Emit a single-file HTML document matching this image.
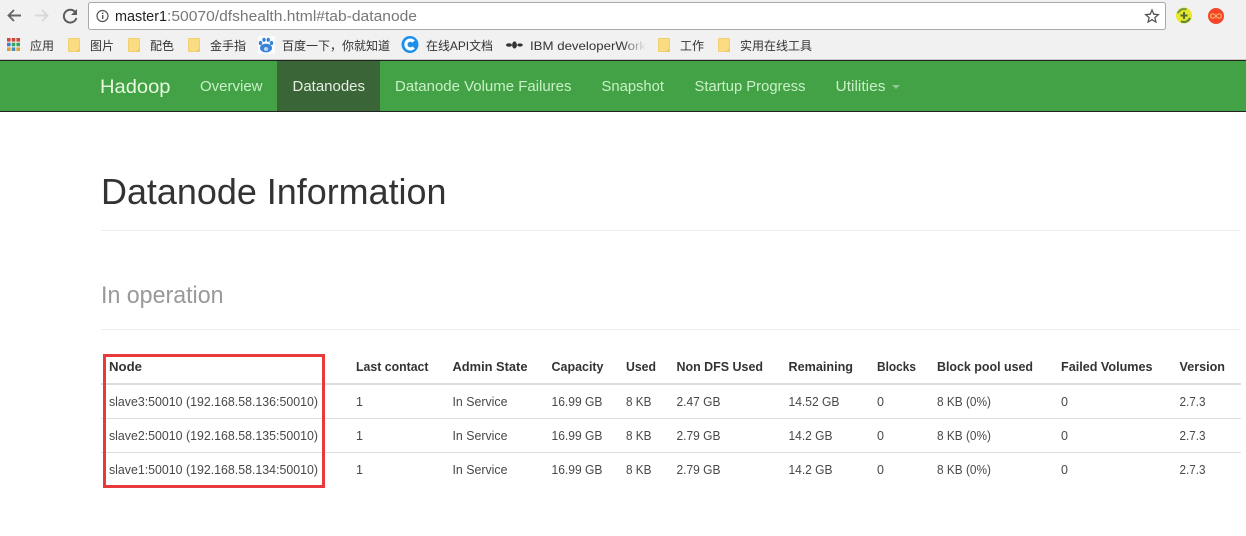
<!DOCTYPE html>
<html lang="zh"><head><meta charset="utf-8"><title>Datanode Information</title>
<style>
html,body{margin:0;padding:0;background:#fff;width:1246px;height:536px;overflow:hidden}
svg{display:block}
text{font-family:"Liberation Sans","Noto Sans CJK SC",sans-serif;white-space:pre}
.b text{font-size:12px;fill:#333}
.n text{font-size:14.5px;fill:#c9f0c6}
.h text{font-size:12.5px;font-weight:bold;fill:#333}
.d text{font-size:12.5px;fill:#484848}
</style></head><body>
<svg width="1246" height="536" viewBox="0 0 1246 536" xmlns="http://www.w3.org/2000/svg">
<defs>
<linearGradient id="fade" x1="0" x2="1" y1="0" y2="0"><stop offset="0" stop-color="#f2f1f1" stop-opacity="0"/><stop offset="1" stop-color="#f2f1f1"/></linearGradient>
<g id="folder"><rect x="0.5" y="0.5" width="11" height="13" rx="0.5" fill="#fcdc82" stroke="#f0cf72"/><path d="M8 13.5H11.5V10.5Z" fill="#ecc35e"/></g>
</defs>
<rect width="1246" height="60" fill="#f2f1f1"/>
<!-- nav arrows -->
<path d="M21 15.5H8.5M14 10L8.5 15.5L14 21" fill="none" stroke="#666" stroke-width="1.9"/>
<path d="M35 15.5H47.5M42 10L47.5 15.5L42 21" fill="none" stroke="#d8d8d8" stroke-width="1.9"/>
<path d="M75.5 12.5A6.4 6.4 0 1 0 76.4 18" fill="none" stroke="#5c5c5c" stroke-width="2"/>
<path d="M77 9V15H71Z" fill="#5c5c5c"/>
<!-- address bar -->
<rect x="88.5" y="2.5" width="1077" height="27" rx="2" fill="#fff" stroke="#a9a9a9"/>
<circle cx="102.5" cy="16" r="5.5" fill="none" stroke="#555" stroke-width="1.2"/>
<rect x="102" y="15" width="1.4" height="4" fill="#555"/><rect x="102" y="12.6" width="1.4" height="1.4" fill="#555"/>
<text x="115" y="21" font-size="14.5" fill="#222" textLength="52" lengthAdjust="spacingAndGlyphs">master1</text>
<text x="167" y="21" font-size="14.5" fill="#777" textLength="250" lengthAdjust="spacingAndGlyphs">:50070/dfshealth.html#tab-datanode</text>
<path d="M1152 10L1153.8 14.2L1158.3 14.6L1154.9 17.6L1155.9 22L1152 19.7L1148.1 22L1149.1 17.6L1145.7 14.6L1150.2 14.2Z" fill="none" stroke="#555" stroke-width="1.3"/>
<!-- extensions -->
<circle cx="1184" cy="15.5" r="8" fill="#e8e62e"/>
<path d="M1176.8 13A7.6 7.6 0 0 1 1187 8.5L1186 10.5A5.4 5.4 0 0 0 1179 13.6Z" fill="#7da03a"/>
<path d="M1191 18.5A7.6 7.6 0 0 1 1180.5 22.2L1181.5 20.3A5.4 5.4 0 0 0 1189 17.5Z" fill="#5e8a3a"/>
<path d="M1184 12V19M1180.5 15.5H1187.5" stroke="#4f6e30" stroke-width="2"/>
<circle cx="1216" cy="16" r="8" fill="#f2452a"/>
<path d="M1216 16C1214 13 1210.5 13.5 1210.5 16S1214 19 1216 16C1218 13 1221.5 13.5 1221.5 16S1218 19 1216 16Z" fill="none" stroke="#f8b060" stroke-width="1.2"/>
<!-- bookmarks -->
<g>
<rect x="7" y="38" width="3.6" height="3.6" fill="#d3453a"/><rect x="11.7" y="38" width="3.6" height="3.6" fill="#c9473c"/><rect x="16.4" y="38" width="3.6" height="3.6" fill="#d3453a"/>
<rect x="7" y="42.7" width="3.6" height="3.6" fill="#3f7fd0"/><rect x="11.7" y="42.7" width="3.6" height="3.6" fill="#3aa35a"/><rect x="16.4" y="42.7" width="3.6" height="3.6" fill="#3aa35a"/>
<rect x="7" y="47.4" width="3.6" height="3.6" fill="#e0a030"/><rect x="11.7" y="47.4" width="3.6" height="3.6" fill="#3f8fc0"/><rect x="16.4" y="47.4" width="3.6" height="3.6" fill="#e0a030"/>
</g>
<use href="#folder" x="68" y="38"/><use href="#folder" x="128" y="38"/><use href="#folder" x="188" y="38"/><use href="#folder" x="658" y="38"/><use href="#folder" x="718" y="38"/>
<!-- baidu paw -->
<rect x="258" y="36" width="17" height="18" fill="#fafcff"/>
<g fill="#3a82d6"><ellipse cx="266" cy="48" rx="6" ry="4.4"/><ellipse cx="260.5" cy="43" rx="1.7" ry="2.1"/><ellipse cx="264" cy="39.8" rx="1.7" ry="2.1"/><ellipse cx="268.3" cy="39.8" rx="1.7" ry="2.1"/><ellipse cx="271.5" cy="43" rx="1.7" ry="2.1"/></g>
<ellipse cx="266" cy="49" rx="2.2" ry="2" fill="#b9d4f4"/>
<!-- C icon -->
<circle cx="410" cy="44.5" r="8.5" fill="#1b90ea"/>
<path d="M413.6 41.6A4.4 4.4 0 1 0 413.6 47.4" fill="none" stroke="#fff" stroke-width="3.2"/>
<!-- IBM bee -->
<g fill="#333"><ellipse cx="514.5" cy="45" rx="2.4" ry="3.6"/><ellipse cx="509" cy="45" rx="3" ry="1.8"/><ellipse cx="520" cy="45" rx="2.8" ry="1.6"/></g>
<g class="b">
<text x="30" y="50" textLength="24">应用</text>
<text x="90" y="50" textLength="24">图片</text>
<text x="150" y="50" textLength="24">配色</text>
<text x="210" y="50" textLength="36">金手指</text>
<text x="282" y="50" textLength="108">百度一下，你就知道</text>
<text x="426" y="50" textLength="67" lengthAdjust="spacingAndGlyphs">在线API文档</text>
<text x="530" y="50" textLength="116" lengthAdjust="spacingAndGlyphs">IBM developerWork</text>
<text x="680" y="50" textLength="24">工作</text>
<text x="740" y="50" textLength="72">实用在线工具</text>
</g>
<rect x="622" y="36" width="24" height="20" fill="url(#fade)"/>
<!-- navbar -->
<rect x="0" y="59" width="1246" height="1" fill="#c9c9c5"/>
<rect x="0" y="60" width="1246" height="52" fill="#222"/>
<rect x="0" y="61" width="1246" height="50" fill="#43a246"/>
<rect x="277" y="61" width="103" height="50" fill="#3a6537"/>
<text x="100" y="93" font-size="19.5" fill="#e6f8e0" textLength="70.5" lengthAdjust="spacingAndGlyphs">Hadoop</text>
<g class="n">
<text x="200" y="91" textLength="62.5" lengthAdjust="spacingAndGlyphs">Overview</text>
<text x="292.5" y="91" textLength="72.5" lengthAdjust="spacingAndGlyphs" style="fill:#e8eee6">Datanodes</text>
<text x="395" y="91" textLength="176.5" lengthAdjust="spacingAndGlyphs">Datanode Volume Failures</text>
<text x="601.5" y="91" textLength="62.5" lengthAdjust="spacingAndGlyphs">Snapshot</text>
<text x="694.5" y="91" textLength="111" lengthAdjust="spacingAndGlyphs">Startup Progress</text>
<text x="835.5" y="91" textLength="50" lengthAdjust="spacingAndGlyphs">Utilities</text>
</g>
<path d="M892 85H900L896 89Z" fill="#8fc98f"/>
<!-- headings -->
<text x="101" y="204" font-size="36" fill="#333" textLength="345.5" lengthAdjust="spacingAndGlyphs">Datanode Information</text>
<rect x="101" y="230" width="1139" height="1" fill="#eee"/>
<text x="101" y="303" font-size="24" fill="#999" textLength="122.5" lengthAdjust="spacingAndGlyphs">In operation</text>
<rect x="101" y="329" width="1139" height="1" fill="#eee"/>
<!-- table -->
<rect x="101" y="383" width="1140" height="2" fill="#ddd"/>
<rect x="101" y="418" width="1140" height="1" fill="#ddd"/>
<rect x="101" y="452" width="1140" height="1" fill="#ddd"/>
<g class="h">
<text x="109" y="371" textLength="33" lengthAdjust="spacingAndGlyphs">Node</text>
<text x="356" y="371" textLength="72.5" lengthAdjust="spacingAndGlyphs">Last contact</text>
<text x="452.5" y="371" textLength="75" lengthAdjust="spacingAndGlyphs">Admin State</text>
<text x="551.5" y="371" textLength="52" lengthAdjust="spacingAndGlyphs">Capacity</text>
<text x="626" y="371" textLength="30" lengthAdjust="spacingAndGlyphs">Used</text>
<text x="676.5" y="371" textLength="86.5" lengthAdjust="spacingAndGlyphs">Non DFS Used</text>
<text x="788.5" y="371" textLength="64.5" lengthAdjust="spacingAndGlyphs">Remaining</text>
<text x="877" y="371" textLength="39" lengthAdjust="spacingAndGlyphs">Blocks</text>
<text x="937" y="371" textLength="96" lengthAdjust="spacingAndGlyphs">Block pool used</text>
<text x="1061" y="371" textLength="91.5" lengthAdjust="spacingAndGlyphs">Failed Volumes</text>
<text x="1179.5" y="371" textLength="45.5" lengthAdjust="spacingAndGlyphs">Version</text>
</g>
<g class="d">
<text x="109" y="406" textLength="209" lengthAdjust="spacingAndGlyphs">slave3:50010 (192.168.58.136:50010)</text>
<text x="356" y="406">1</text><text x="452.5" y="406" textLength="55" lengthAdjust="spacingAndGlyphs">In Service</text><text x="551.5" y="406" textLength="51" lengthAdjust="spacingAndGlyphs">16.99 GB</text><text x="626" y="406" textLength="25.5" lengthAdjust="spacingAndGlyphs">8 KB</text><text x="676.5" y="406" textLength="44" lengthAdjust="spacingAndGlyphs">2.47 GB</text><text x="788.5" y="406" textLength="51" lengthAdjust="spacingAndGlyphs">14.52 GB</text><text x="877" y="406">0</text><text x="937" y="406" textLength="54" lengthAdjust="spacingAndGlyphs">8 KB (0%)</text><text x="1061" y="406">0</text><text x="1179.5" y="406" textLength="26" lengthAdjust="spacingAndGlyphs">2.7.3</text>
<text x="109" y="440" textLength="209" lengthAdjust="spacingAndGlyphs">slave2:50010 (192.168.58.135:50010)</text>
<text x="356" y="440">1</text><text x="452.5" y="440" textLength="55" lengthAdjust="spacingAndGlyphs">In Service</text><text x="551.5" y="440" textLength="51" lengthAdjust="spacingAndGlyphs">16.99 GB</text><text x="626" y="440" textLength="25.5" lengthAdjust="spacingAndGlyphs">8 KB</text><text x="676.5" y="440" textLength="44" lengthAdjust="spacingAndGlyphs">2.79 GB</text><text x="788.5" y="440" textLength="44" lengthAdjust="spacingAndGlyphs">14.2 GB</text><text x="877" y="440">0</text><text x="937" y="440" textLength="54" lengthAdjust="spacingAndGlyphs">8 KB (0%)</text><text x="1061" y="440">0</text><text x="1179.5" y="440" textLength="26" lengthAdjust="spacingAndGlyphs">2.7.3</text>
<text x="109" y="474" textLength="209" lengthAdjust="spacingAndGlyphs">slave1:50010 (192.168.58.134:50010)</text>
<text x="356" y="474">1</text><text x="452.5" y="474" textLength="55" lengthAdjust="spacingAndGlyphs">In Service</text><text x="551.5" y="474" textLength="51" lengthAdjust="spacingAndGlyphs">16.99 GB</text><text x="626" y="474" textLength="25.5" lengthAdjust="spacingAndGlyphs">8 KB</text><text x="676.5" y="474" textLength="44" lengthAdjust="spacingAndGlyphs">2.79 GB</text><text x="788.5" y="474" textLength="44" lengthAdjust="spacingAndGlyphs">14.2 GB</text><text x="877" y="474">0</text><text x="937" y="474" textLength="54" lengthAdjust="spacingAndGlyphs">8 KB (0%)</text><text x="1061" y="474">0</text><text x="1179.5" y="474" textLength="26" lengthAdjust="spacingAndGlyphs">2.7.3</text>
</g>
<!-- red annotation box -->
<rect x="104.5" y="355.5" width="219" height="131" fill="none" stroke="#e8393c" stroke-width="3"/>
</svg>
</body></html>
